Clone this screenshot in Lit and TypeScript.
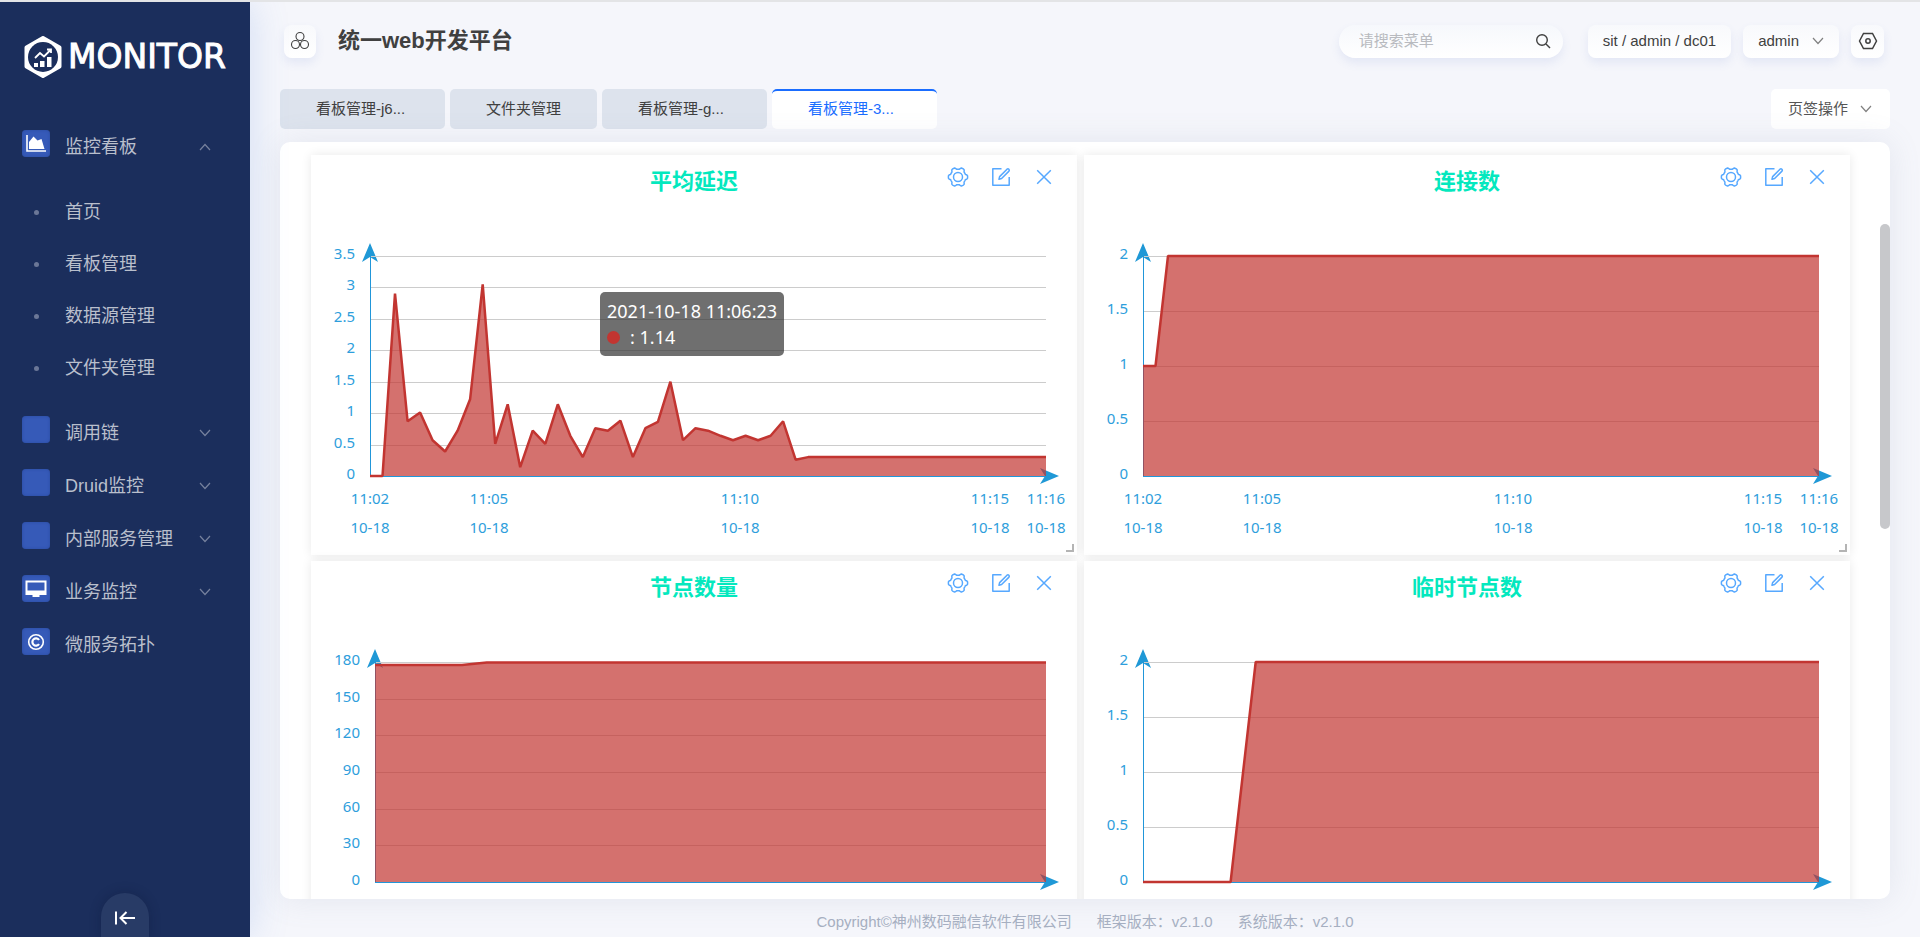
import { LitElement, html, css, svg, nothing } from "lit";
import { customElement, property } from "lit/decorators.js";
import { classMap } from "lit/directives/class-map.js";

interface Series {
  title: string;
  axisLeft: number;
  max: number;
  ticks: string[];
  values: number[];
  tooltip?: { time: string; value: string };
  timeAxis: boolean;
}

const repeat = (value: number, count: number): number[] => Array(count).fill(value);

const TIME_LABELS = [
  { time: "11:02", at: 0 },
  { time: "11:05", at: 0.1765 },
  { time: "11:10", at: 0.547 },
  { time: "11:15", at: 0.9165 },
  { time: "11:16", at: 1 },
];

const CHARTS: Series[] = [
  {
    title: "平均延迟",
    axisLeft: 59,
    max: 3.5,
    ticks: ["0", "0.5", "1", "1.5", "2", "2.5", "3", "3.5"],
    values: [
      0, 0, 2.9, 0.87, 1.01, 0.57, 0.39, 0.72, 1.22, 3.05, 0.51, 1.14, 0.14, 0.72, 0.51, 1.14, 0.64, 0.3, 0.76,
      0.72, 0.88, 0.3, 0.76, 0.86, 1.5, 0.57, 0.76, 0.72, 0.64, 0.57, 0.64, 0.57, 0.64, 0.87, 0.26,
      ...repeat(0.3, 20),
    ],
    tooltip: { time: "2021-10-18 11:06:23", value: "1.14" },
    timeAxis: true,
  },
  {
    title: "连接数",
    axisLeft: 59,
    max: 2,
    ticks: ["0", "0.5", "1", "1.5", "2"],
    values: [1, 1, ...repeat(2, 53)],
    timeAxis: true,
  },
  {
    title: "节点数量",
    axisLeft: 64,
    max: 180,
    ticks: ["0", "30", "60", "90", "120", "150", "180"],
    values: [...repeat(177.5, 8), 178.5, ...repeat(179.5, 46)],
    timeAxis: false,
  },
  {
    title: "临时节点数",
    axisLeft: 59,
    max: 2,
    ticks: ["0", "0.5", "1", "1.5", "2"],
    values: [...repeat(0, 8), 1, ...repeat(2, 46)],
    timeAxis: false,
  },
];

/* A rounded six-tooth cog: the clamped cosine gives flat teeth and flat notches. */
const gearOutline = (cx: number, cy: number, radius: number, bump: number): string => {
  const points: string[] = [];
  for (let i = 0; i < 120; i++) {
    const angle = (i / 120) * Math.PI * 2;
    const r = radius + bump * Math.max(-1, Math.min(1, 1.8 * Math.cos(angle * 6)));
    points.push(`${(cx + r * Math.cos(angle)).toFixed(2)} ${(cy + r * Math.sin(angle)).toFixed(2)}`);
  }
  return `M${points.join("L")}Z`;
};

const chevron = (up = false) => html`<svg class="chevron" viewBox="0 0 12 8" aria-hidden="true">
  <path d=${up ? "M1 7L6 1.5L11 7" : "M1 1L6 6.5L11 1"} fill="none" stroke="currentColor" stroke-width="1.2" />
</svg>`;

@customElement("area-chart")
export class AreaChart extends LitElement {
  @property({ attribute: false }) series!: Series;

  static styles = css`
    :host {
      display: block;
    }
    .plot {
      display: block;
      width: 100%;
      height: auto;
      font-family: "Noto Sans", "Open Sans", sans-serif;
      font-size: 15px;
    }
    .label {
      fill: #2e9edc;
    }
    .grid {
      stroke: #cccccc;
      shape-rendering: crispEdges;
    }
    .axis {
      stroke: #2196d9;
      shape-rendering: crispEdges;
    }
    .arrow {
      fill: #1f98d6;
    }
    .area {
      fill: #c23531;
      fill-opacity: 0.7;
    }
    .line {
      fill: none;
      stroke: #c23531;
      stroke-width: 2.5;
      stroke-linejoin: bevel;
    }
  `;

  render() {
    const { axisLeft: left, max, ticks, values, timeAxis, title } = this.series;
    const right = 735;
    const top = 41;
    const bottom = 261;
    const x = (i: number) => left + (i / (values.length - 1)) * (right - left);
    const y = (v: number) => bottom - (v / max) * (bottom - top);
    const line = values.map((v, i) => `${x(i).toFixed(1)},${y(v).toFixed(1)}`).join(" ");
    return html`<svg class="plot" viewBox="0 0 766 340" role="img" aria-label=${title}>
      <path class="arrow" d="M${left} 28l8 19l-8 -5l-8 5z" />
      <path class="arrow" d="M${right + 13} ${bottom}l-19 8l5 -8l-5 -8z" />
      ${ticks.slice(1).map((_, i) => {
        const gy = Math.round(y((max * (i + 1)) / (ticks.length - 1)));
        return svg`<line class="grid" x1=${left} x2=${right} y1=${gy} y2=${gy} />`;
      })}
      <line class="axis" x1=${left} x2=${left} y1=${top} y2=${bottom} />
      <line class="axis" x1=${left} x2=${right} y1=${bottom} y2=${bottom} />
      <polygon class="area" points="${left},${bottom} ${line} ${right},${bottom}" />
      <polyline class="line" points=${line} />
      ${ticks.map((tick, i) => {
        const ty = Math.round(y((max * i) / (ticks.length - 1))) + 3;
        return svg`<text class="label" x=${left - 15} y=${ty} text-anchor="end">${tick}</text>`;
      })}
      ${timeAxis
        ? TIME_LABELS.map(({ time, at }) => {
            const tx = Math.round(left + at * (right - left));
            return svg`
              <text class="label" x=${tx} y="289" text-anchor="middle">${time}</text>
              <text class="label" x=${tx} y="318" text-anchor="middle">10-18</text>`;
          })
        : nothing}
    </svg>`;
  }
}

@customElement("chart-card")
export class ChartCard extends LitElement {
  @property({ attribute: false }) series!: Series;

  static styles = css`
    :host {
      display: block;
      position: relative;
      height: 400px;
      background: #ffffff;
      box-shadow: 0 0 10px rgba(0, 0, 0, 0.09);
    }
    .head {
      display: grid;
      grid-template-columns: 1fr auto 1fr;
      height: 60px;
      padding-right: 12px;
      padding-left: 12px;
      box-sizing: border-box;
    }
    .title {
      grid-column: 2;
      margin: 0;
      padding-top: 11px;
      font-size: 22px;
      font-weight: 700;
      line-height: 32px;
      color: #04e8be;
    }
    .tools {
      display: flex;
      justify-content: flex-end;
      align-items: flex-start;
      padding-top: 11px;
    }
    .tool {
      display: flex;
      justify-content: center;
      width: 43px;
      padding: 0;
      border: 0;
      background: none;
      color: #56a8ff;
      cursor: pointer;
    }
    .icon {
      width: 22px;
      height: 22px;
      fill: none;
      stroke: currentColor;
      stroke-width: 1.5;
      stroke-linejoin: round;
    }
    .resize {
      position: absolute;
      right: 3px;
      bottom: 3px;
      width: 6px;
      height: 6px;
      border-right: 2px solid #b4b4b4;
      border-bottom: 2px solid #b4b4b4;
    }
    .tip {
      position: absolute;
      top: 137px;
      left: 289px;
      padding: 6px 7px;
      border-radius: 5px;
      background: rgba(50, 50, 50, 0.7);
      color: #ffffff;
      font-family: "Noto Sans", "Open Sans", sans-serif;
      font-size: 18px;
      line-height: 26px;
      white-space: nowrap;
    }
    .tip-row {
      display: flex;
      align-items: center;
      gap: 10px;
    }
    .dot {
      width: 13px;
      height: 13px;
      border-radius: 50%;
      background: #c23531;
    }
  `;

  render() {
    const { title, tooltip } = this.series;
    return html`
      <div class="head">
        <h2 class="title">${title}</h2>
        <div class="tools">
          <button class="tool" aria-label="设置">
            <svg class="icon" viewBox="0 0 22 22">
              <path d=${gearOutline(11, 11, 8.7, 0.9)} />
              <circle cx="11" cy="11" r="4.5" />
            </svg>
          </button>
          <button class="tool" aria-label="编辑">
            <svg class="icon" viewBox="0 0 22 22">
              <path d="M11.500 2.800H2.800V19.200H19.200V11" />
              <path d="M9 13.2L9.6 10.6L17 3.2Q18 2.4 18.9 3.2Q19.7 4.2 19 5.1L11.6 12.5Z" />
            </svg>
          </button>
          <button class="tool" aria-label="关闭">
            <svg class="icon" viewBox="0 0 22 22">
              <path d="M4.2 4.2L17.8 17.8M17.8 4.2L4.2 17.8" />
            </svg>
          </button>
        </div>
      </div>
      <area-chart .series=${this.series}></area-chart>
      ${tooltip
        ? html`<div class="tip">
            <div>${tooltip.time}</div>
            <div class="tip-row"><span class="dot"></span><span>: ${tooltip.value}</span></div>
          </div>`
        : nothing}
      <span class="resize"></span>
    `;
  }
}

@customElement("side-bar")
export class SideBar extends LitElement {
  static styles = css`
    :host {
      display: flex;
      flex-direction: column;
      flex: 0 0 250px;
      position: relative;
      z-index: 1;
      background: #1b2e5c;
      box-shadow: 0 0 36px rgba(80, 130, 220, 0.22);
    }
    .brand {
      display: flex;
      align-items: center;
      gap: 5px;
      height: 118px;
      padding: 0 0 8px 23px;
      box-sizing: border-box;
      color: #ffffff;
      font-family: "DejaVu Sans", sans-serif;
      font-size: 33px;
      line-height: 40px;
      text-decoration: none;
      -webkit-text-stroke: 1px #ffffff;
    }
    .mark {
      flex: none;
      width: 40px;
      height: 42px;
    }
    .menu,
    .sub {
      margin: 0;
      padding: 0;
      list-style: none;
    }
    .menu {
      flex: 1;
    }
    .sub {
      padding: 13px 0 12px;
    }
    .item {
      display: grid;
      grid-template-columns: 28px 1fr 12px;
      column-gap: 15px;
      align-items: center;
      height: 53px;
      padding: 0 39px 0 22px;
      color: #b9bfcc;
      font-size: 18px;
      line-height: 26px;
      text-decoration: none;
    }
    .sub .item {
      height: 52px;
    }
    .tile {
      display: flex;
      justify-content: center;
      align-items: center;
      height: 27px;
      margin-bottom: 6px;
      border-radius: 4px;
      background: #365ab8;
      box-shadow: inset 0 0 3px #2a4a9e;
      color: #ffffff;
    }
    .glyph {
      width: 24px;
      height: 24px;
    }
    .bullet {
      justify-self: center;
      width: 5px;
      height: 5px;
      border-radius: 50%;
      background: #6b7797;
    }
    .chevron {
      width: 12px;
      height: 8px;
      color: #76819d;
    }
    .foot {
      display: flex;
      justify-content: center;
    }
    .fold {
      display: flex;
      justify-content: center;
      align-items: center;
      width: 48px;
      height: 44px;
      padding: 6px 0 0;
      border: 0;
      border-radius: 24px 24px 0 0;
      background: #283b66;
      box-shadow: 0 0 12px rgba(10, 20, 50, 0.3);
      color: #ffffff;
    }
    .fold-icon {
      width: 22px;
      height: 16px;
    }
  `;

  private glyphs: Record<string, unknown> = {
    chart: svg`<path d="M3 3V19H22" fill="none" stroke="currentColor" stroke-width="1.6" />
      <path d="M5 17V10L9.500 4.500L13.500 8.500L17.500 7L20.500 17Z" fill="currentColor" />`,
    screen: svg`<path d="M1.500 3.500h21v14.500h-21zM3.500 5.500v8h17v-8z" fill="currentColor" fill-rule="evenodd" />
      <path d="M8.500 18h7v2h-7z" fill="currentColor" />`,
    copy: svg`<circle cx="12" cy="12" r="7.300" fill="none" stroke="currentColor" stroke-width="1.600" />
      <path d="M15 10A3.600 3.600 0 1 0 15 14" fill="none" stroke="currentColor" stroke-width="2.200" />`,
  };

  private parent(label: string, glyph?: string, arrow?: "up" | "down") {
    return html`<a class="item" href="#">
      <span class="tile">
        ${glyph ? html`<svg class="glyph" viewBox="0 0 24 24">${this.glyphs[glyph]}</svg>` : nothing}
      </span>
      <span>${label}</span>
      ${arrow ? chevron(arrow === "up") : nothing}
    </a>`;
  }

  render() {
    return html`
      <a class="brand" href="#">
        <svg class="mark" viewBox="0 0 40 42" aria-hidden="true">
          <path
            d="M20 2L36.500 11.500V30.500L20 40L3.500 30.500V11.500Z"
            fill="currentColor"
            stroke="currentColor"
            stroke-width="4"
            stroke-linejoin="round"
          />
          <circle cx="20" cy="21" r="15" fill="#1b2e5c" />
          <path d="M12 22L17 17L21 20.500L28 13.500M24 13.500H28V17" fill="none" stroke="currentColor" stroke-width="1.800" />
          <path d="M11 27h4v4h-4zM17 25h4.500v6h-4.500zM24 21h4.500v10h-4.500z" fill="currentColor" />
        </svg>
        <span>MONITOR</span>
      </a>
      <ul class="menu">
        <li>
          ${this.parent("监控看板", "chart", "up")}
          <ul class="sub">
            ${["首页", "看板管理", "数据源管理", "文件夹管理"].map(
              (label) => html`<li>
                <a class="item" href="#"><span class="bullet"></span><span>${label}</span></a>
              </li>`,
            )}
          </ul>
        </li>
        <li>${this.parent("调用链", undefined, "down")}</li>
        <li>${this.parent("Druid监控", undefined, "down")}</li>
        <li>${this.parent("内部服务管理", undefined, "down")}</li>
        <li>${this.parent("业务监控", "screen", "down")}</li>
        <li>${this.parent("微服务拓扑", "copy")}</li>
      </ul>
      <div class="foot">
        <button class="fold" aria-label="收起菜单">
          <svg class="fold-icon" viewBox="0 0 22 16" fill="none" stroke="currentColor" stroke-width="2">
            <path d="M2 1.500V14.500M21 8H7M12.500 2L6.500 8L12.500 14" />
          </svg>
        </button>
      </div>
    `;
  }
}

@customElement("app-root")
export class AppRoot extends LitElement {
  static styles = css`
    :host {
      display: flex;
      height: 100vh;
      box-sizing: border-box;
      border-top: 2px solid #e3e4e6;
      overflow: hidden;
      background: #f5f6fb;
      color: #404040;
      font-family: "Liberation Sans", "Noto Sans CJK SC", sans-serif;
      font-size: 15px;
      line-height: 22px;
    }
    .main {
      display: flex;
      flex-direction: column;
      flex: 1;
      min-width: 0;
      padding: 0 30px;
    }
    .top {
      display: flex;
      align-items: center;
      height: 78px;
    }
    .app-button,
    .pill {
      display: flex;
      align-items: center;
      justify-content: center;
      height: 33px;
      padding: 0;
      border: 0;
      border-radius: 8px;
      background: linear-gradient(#f8f9fc, #ffffff);
      box-shadow: 0 5px 10px rgba(90, 120, 200, 0.11);
      color: #404040;
      font: inherit;
    }
    .app-button {
      width: 32px;
      margin: 0 22px 0 4px;
    }
    .name {
      flex: 1;
      margin: 0;
      font-size: 22px;
      line-height: 32px;
      font-weight: 700;
    }
    .search {
      display: flex;
      align-items: center;
      width: 224px;
      height: 33px;
      margin-right: 25px;
      padding: 0 12px 0 20px;
      box-sizing: border-box;
      border-radius: 17px;
      background: linear-gradient(#f6f8fc, #ffffff);
      box-shadow: 0 5px 10px rgba(90, 120, 200, 0.11);
    }
    .query {
      flex: 1;
      min-width: 0;
      padding: 0;
      border: 0;
      outline: 0;
      background: none;
      font: inherit;
    }
    .query::placeholder {
      color: #b8babf;
      opacity: 1;
    }
    .pills {
      display: flex;
      gap: 12px;
      padding-right: 6px;
    }
    .pill {
      padding: 0 15px;
      gap: 13px;
    }
    .pill.square {
      width: 33px;
      padding: 0;
    }
    .icon {
      flex: none;
      width: 20px;
      height: 20px;
      fill: none;
      stroke: #404040;
    }
    .icon.small {
      width: 16px;
      height: 16px;
    }
    .chevron {
      flex: none;
      width: 12px;
      height: 8px;
      color: #808080;
    }
    .tabs {
      display: flex;
      gap: 5px;
      margin-top: 9px;
    }
    .tab {
      height: 40px;
      padding: 0 36px;
      border: 0;
      border-radius: 5px;
      background: #dde3ed;
      color: #404040;
      font: inherit;
      text-align: left;
      white-space: nowrap;
    }
    .tab-label {
      display: block;
    }
    .tab.clipped .tab-label {
      width: 93px;
    }
    .tab.active {
      border-top: 2px solid #1a6dff;
      padding-bottom: 2px;
      background: #ffffff;
      color: #1a6dff;
    }
    .tab-menu {
      display: flex;
      align-items: center;
      gap: 12px;
      height: 40px;
      margin-left: auto;
      padding: 0 18px 0 17px;
      border: 0;
      border-radius: 5px;
      background: #ffffff;
      color: #555555;
      font: inherit;
    }
    .panel {
      position: relative;
      flex: 1;
      min-height: 0;
      margin-top: 13px;
      border-radius: 10px;
      background: #ffffff;
      box-shadow: 0 0 32px rgba(120, 135, 160, 0.14);
    }
    .board {
      display: grid;
      grid-template-columns: 1fr 1fr;
      align-content: start;
      gap: 6px 7px;
      height: 100%;
      padding: 13px 40px 0 31px;
      box-sizing: border-box;
      border-radius: 10px;
      overflow: hidden;
    }
    .thumb {
      position: absolute;
      top: 82px;
      right: 0;
      width: 10px;
      height: 305px;
      border-radius: 5px;
      background: #c7c8cb;
    }
    .footer {
      display: flex;
      justify-content: center;
      align-items: center;
      gap: 25px;
      height: 38px;
      padding-top: 8px;
      box-sizing: border-box;
      color: #a7b0c2;
    }
  `;

  private tabs = [
    { label: "看板管理-j6...", clipped: true, active: false },
    { label: "文件夹管理", clipped: false, active: false },
    { label: "看板管理-g...", clipped: true, active: false },
    { label: "看板管理-3...", clipped: true, active: true },
  ];

  render() {
    return html`
      <side-bar></side-bar>
      <main class="main">
        <header class="top">
          <button class="app-button" aria-label="应用">
            <svg class="icon" viewBox="0 0 20 20" stroke-width="1.1">
              <circle cx="10" cy="5.500" r="4" />
              <circle cx="5.500" cy="13.500" r="4" />
              <circle cx="14.500" cy="13.500" r="4" />
            </svg>
          </button>
          <h1 class="name">统一web开发平台</h1>
          <label class="search">
            <input class="query" type="search" placeholder="请搜索菜单" aria-label="请搜索菜单" />
            <svg class="icon small" viewBox="0 0 16 16" stroke-width="1.4">
              <circle cx="7" cy="7" r="5.300" />
              <path d="M11 11L15 15" />
            </svg>
          </label>
          <div class="pills">
            <button class="pill">sit / admin / dc01</button>
            <button class="pill">admin ${chevron()}</button>
            <button class="pill square" aria-label="系统设置">
              <svg class="icon" viewBox="0 0 20 20" stroke-width="1.500">
                <path d="M1.500 10L5.500 2.500H14.500L18.500 10L14.500 17.500H5.500Z" />
                <circle cx="10" cy="10" r="2.200" />
              </svg>
            </button>
          </div>
        </header>
        <nav class="tabs">
          ${this.tabs.map(
            (tab) => html`<button class=${classMap({ tab: true, clipped: tab.clipped, active: tab.active })}>
              <span class="tab-label">${tab.label}</span>
            </button>`,
          )}
          <button class="tab-menu">页签操作 ${chevron()}</button>
        </nav>
        <section class="panel">
          <div class="board">${CHARTS.map((series) => html`<chart-card .series=${series}></chart-card>`)}</div>
          <div class="thumb"></div>
        </section>
        <footer class="footer">
          <span>Copyright©神州数码融信软件有限公司</span>
          <span>框架版本：v2.1.0</span>
          <span>系统版本：v2.1.0</span>
        </footer>
      </main>
    `;
  }
}
